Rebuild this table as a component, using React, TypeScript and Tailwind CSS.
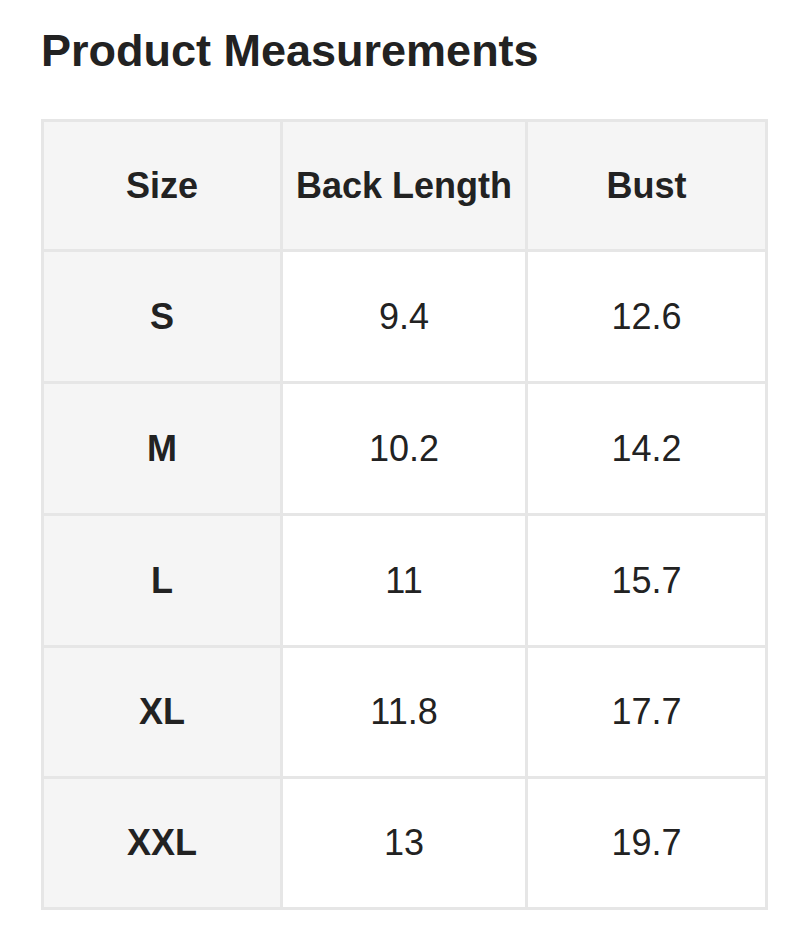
import React from "react";

const rows = [
  ["S", "9.4", "12.6"],
  ["M", "10.2", "14.2"],
  ["L", "11", "15.7"],
  ["XL", "11.8", "17.7"],
  ["XXL", "13", "19.7"],
];

const heights = ["h-[129px]", "h-[129px]", "h-[129px]", "h-[128px]", "h-[128px]"];

export default function App() {
  return (
    <div
      className="w-[810px] h-[939px] bg-white text-[#222222]"
      style={{ fontFamily: '"Liberation Sans", Arial, sans-serif' }}
    >
      <div className="pl-[41px] pt-[26px]">
        <h1 className="text-[45px] leading-[50px] font-bold m-0">Product Measurements</h1>
        <div className="mt-[43px] w-[727px] bg-[#e6e6e6] p-[3px] grid grid-cols-[236px_242px_237px] gap-[3px] text-[36px]">
          <div className="h-[127px] bg-[#f5f5f5] flex items-center justify-center font-bold">Size</div>
          <div className="h-[127px] bg-[#f5f5f5] flex items-center justify-center font-bold">Back Length</div>
          <div className="h-[127px] bg-[#f5f5f5] flex items-center justify-center font-bold">Bust</div>
          {rows.map((r, i) => (
            <React.Fragment key={r[0]}>
              <div className={`${heights[i]} bg-[#f5f5f5] flex items-center justify-center font-bold`}>{r[0]}</div>
              <div className={`${heights[i]} bg-white flex items-center justify-center`}>{r[1]}</div>
              <div className={`${heights[i]} bg-white flex items-center justify-center`}>{r[2]}</div>
            </React.Fragment>
          ))}
        </div>
      </div>
    </div>
  );
}
